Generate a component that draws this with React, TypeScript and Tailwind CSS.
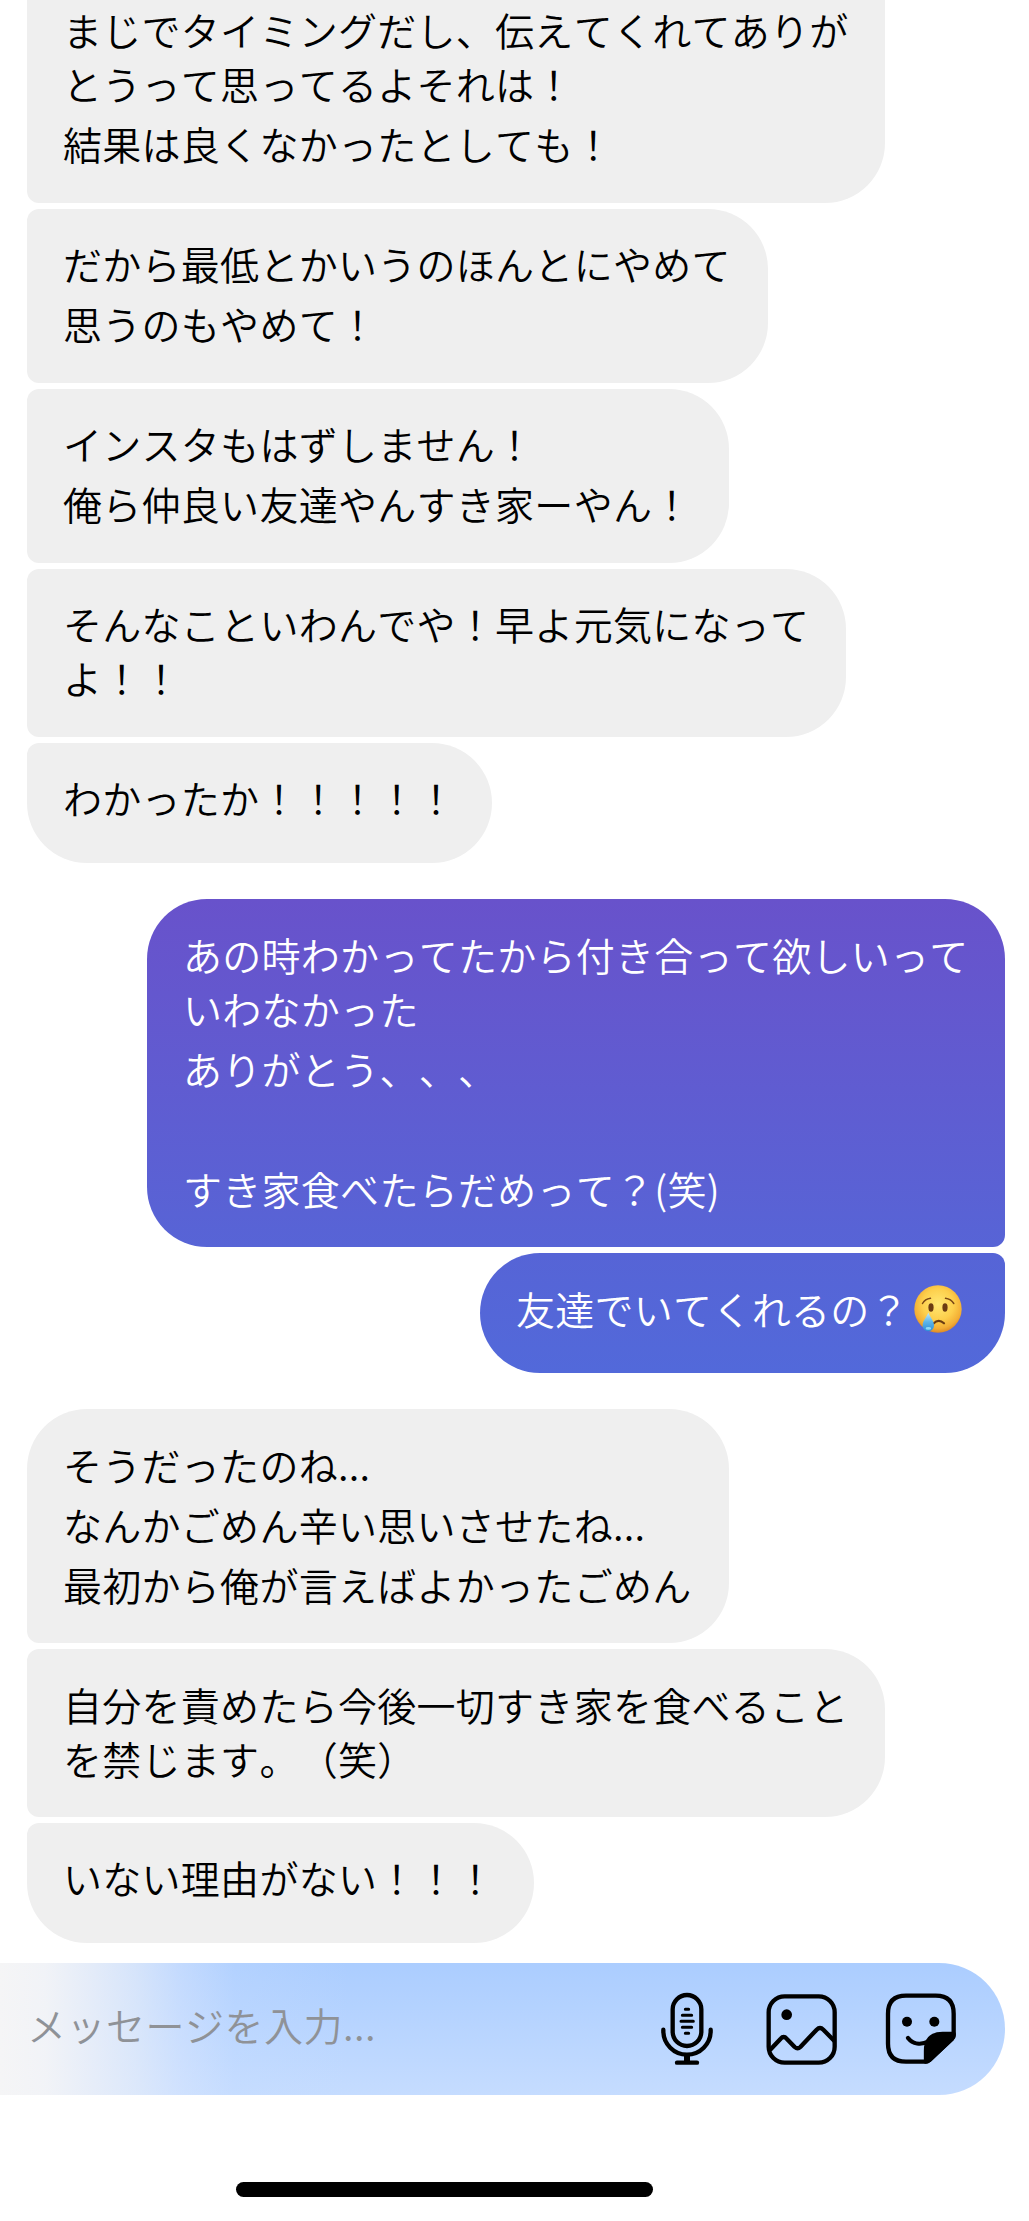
import clsx from "clsx";

type Message = {
	lines: string[][];
	sad?: boolean;
	className: string;
};

// every inner array is one paragraph, its items are the wrapped rows
const received: Message[] = [
	{
		lines: [
			["まじでタイミングだし、伝えてくれてありが", "とうって思ってるよそれは！"],
			["結果は良くなかったとしても！"],
		],
		className: "w-[858px] h-[203px] pt-[2px] rounded-br-[60px] rounded-bl-xl",
	},
	{
		lines: [["だから最低とかいうのほんとにやめて"], ["思うのもやめて！"]],
		className: "w-[741px] h-[174px] pt-[27px] rounded-r-[60px] rounded-l-xl",
	},
	{
		lines: [["インスタもはずしません！"], ["俺ら仲良い友達やんすき家ーやん！"]],
		className: "w-[702px] h-[174px] pt-[27px] rounded-r-[60px] rounded-l-xl",
	},
	{
		lines: [["そんなこといわんでや！早よ元気になって", "よ！！"]],
		className: "w-[819px] h-[168px] pt-[27px] rounded-r-[60px] rounded-l-xl",
	},
	{
		lines: [["わかったか！！！！！"]],
		className: "w-[465px] h-[120px] pt-[27px] rounded-[60px] rounded-tl-xl",
	},
];

const sent: Message[] = [
	{
		lines: [
			["あの時わかってたから付き合って欲しいって", "いわなかった"],
			["ありがとう、、、"],
			[""],
			["すき家食べたらだめって？(笑)"],
		],
		className:
			"w-[858px] h-[348px] pt-[28px] rounded-[60px] rounded-br-xl bg-linear-to-b from-[#6852cb] to-[#5764d6]",
	},
	{
		lines: [["友達でいてくれるの？"]],
		sad: true,
		className:
			"w-[525px] h-[120px] pt-[28px] rounded-[60px] rounded-tr-xl bg-linear-to-b from-[#5664d6] to-[#5269da]",
	},
];

const replies: Message[] = [
	{
		lines: [
			["そうだったのね..."],
			["なんかごめん辛い思いさせたね..."],
			["最初から俺が言えばよかったごめん"],
		],
		className: "w-[702px] h-[234px] pt-[28px] rounded-[60px] rounded-bl-xl",
	},
	{
		lines: [["自分を責めたら今後一切すき家を食べること", "を禁じます。（笑）"]],
		className: "w-[858px] h-[168px] pt-[28px] rounded-r-[60px] rounded-l-xl",
	},
	{
		lines: [["いない理由がない！！！"]],
		className: "w-[507px] h-[120px] pt-[27px] rounded-[60px] rounded-tl-xl",
	},
];

const CryingFace = () => (
	<svg viewBox="0 0 48 48" className="h-12 w-12 shrink-0">
		<defs>
			<radialGradient id="face" cx="0.5" cy="0.4" r="0.6">
				<stop offset="0" stopColor="#ffe873" />
				<stop offset="0.55" stopColor="#fdcf4c" />
				<stop offset="0.85" stopColor="#f3ae35" />
				<stop offset="1" stopColor="#dd8a26" />
			</radialGradient>
			<linearGradient id="tear" x1="0" y1="0" x2="0" y2="1">
				<stop offset="0" stopColor="#c5ecfb" />
				<stop offset="0.5" stopColor="#5cb5ea" />
				<stop offset="1" stopColor="#2f8fd8" />
			</linearGradient>
		</defs>
		<circle cx="24" cy="24" r="23.7" fill="url(#face)" />
		<ellipse cx="17" cy="22.5" rx="2.6" ry="4.2" fill="#6b3c12" />
		<ellipse cx="31" cy="22.5" rx="2.6" ry="4.2" fill="#6b3c12" />
		<path
			d="M8.5 18.5Q11 14 16.5 13.3M31.5 13.3Q37 14 39.8 18.5"
			fill="none"
			stroke="#7a4716"
			strokeWidth="1.5"
			strokeLinecap="round"
		/>
		<path
			d="M19.5 38.5Q24.5 33.2 30 38.3"
			fill="none"
			stroke="#6b3c12"
			strokeWidth="2.2"
			strokeLinecap="round"
		/>
		<path
			d="M14.3 27.5C16 32 20 36 20 40.3C20 44 17.5 46.2 14.4 46.2C11.2 46.2 8.6 44 8.6 40.3C8.6 36 12.6 32 14.3 27.5Z"
			fill="url(#tear)"
		/>
		<ellipse cx="14.4" cy="43.4" rx="2.8" ry="1.4" fill="#8fd8f6" />
	</svg>
);

const Bubble = ({ message, mine }: { message: Message; mine?: boolean }) => (
	<div
		className={clsx(
			"flex pl-9 text-[39px] leading-[54px] tracking-[0.28px]",
			mine ? "text-white" : "bg-[#efefef] text-black",
			message.className
		)}
	>
		<div className="flex flex-col gap-1.5">
			{message.lines.map((rows, i) => (
				<div key={i} className="min-h-[54px]">
					{rows.map((row) => (
						<p key={row} className="whitespace-nowrap">
							{row}
						</p>
					))}
				</div>
			))}
		</div>
		{message.sad && (
			<span className="mt-1 ml-[5px]">
				<CryingFace />
			</span>
		)}
	</div>
);

const MicIcon = () => (
	<svg
		viewBox="60 90 162 234"
		className="h-[78px] w-[54px]"
		fill="none"
		stroke="black"
		strokeWidth="13"
		strokeLinecap="round"
	>
		<rect x="98" y="105" width="86" height="153" rx="43" />
		<path d="M70 209v4a71 71 0 0 0 142 0v-4" />
		<path strokeWidth="18" strokeLinecap="butt" d="M141 286v22" />
		<path d="M111 308h60" />
		<path strokeWidth="9" d="M136 148h10M127 166h28M123 184h37M127 202h28M136 220h10" />
	</svg>
);

const PhotoIcon = () => (
	<svg
		viewBox="375 90 219 234"
		className="h-[78px] w-[73px]"
		fill="none"
		stroke="black"
		strokeWidth="13"
		strokeLinejoin="round"
	>
		<rect x="386" y="109" width="198" height="199" rx="48" />
		<circle cx="440" cy="164" r="16" fill="black" stroke="none" />
		<path d="M390 270L422 236Q431 226 440 236L464 261Q473 269 481 261L530 209Q540 199 550 209L584 244" />
	</svg>
);

const StickerIcon = () => (
	<svg
		viewBox="732 90 219 234"
		className="h-[78px] w-[73px]"
		fill="none"
		stroke="black"
		strokeWidth="13"
		strokeLinecap="round"
		strokeLinejoin="round"
	>
		<path d="M857 305H798Q744 305 744 251V161Q744 107 798 107H887Q941 107 941 161V226Q941 231 937 235L867 301Q863 305 857 305Z" />
		<path
			d="M941 222H908Q858 222 858 272V305Q862 305 867 301L937 235Q941 231 941 222Z"
			fill="black"
		/>
		<circle cx="801" cy="185" r="15" fill="black" stroke="none" />
		<circle cx="883" cy="185" r="15" fill="black" stroke="none" />
		<path d="M804 234C818 252 842 256 868 244" />
	</svg>
);

const MessageInput = () => (
	<div className="mt-5 mr-6 h-[132px] overflow-hidden rounded-r-[66px] bg-linear-to-b from-[#abcdff] to-[#c5dcff]">
		<div className="flex h-full items-center bg-[linear-gradient(to_right,#f5f5f6_0px,#f3f4f7f8_45px,#ecf0f8e0_90px,#e6edf9b8_135px,#dbe7fd80_180px,#c8deff40_235px,#b8d4ff00_350px)] pr-12 pl-[27px]">
			<span className="flex-1 pb-2.5 text-[39px] leading-[54px] tracking-[0.5px] text-[#8f9297]">
				メッセージを入力...
			</span>
			<MicIcon />
			<span className="ml-[51px]">
				<PhotoIcon />
			</span>
			<span className="ml-[46px]">
				<StickerIcon />
			</span>
		</div>
	</div>
);

const App = () => {
	return (
		<div className="h-[2221px] w-[1029px] overflow-hidden bg-white font-['Noto_Sans_CJK_JP',sans-serif] font-[350] [font-kerning:none] [text-spacing-trim:space-all]">
			<div className="flex flex-col gap-9 pr-6 pl-[27px]">
				<div className="flex flex-col items-start gap-1.5">
					{received.map((message, i) => (
						<Bubble key={i} message={message} />
					))}
				</div>
				<div className="flex flex-col items-end gap-1.5">
					{sent.map((message, i) => (
						<Bubble key={i} message={message} mine />
					))}
				</div>
				<div className="flex flex-col items-start gap-1.5">
					{replies.map((message, i) => (
						<Bubble key={i} message={message} />
					))}
				</div>
			</div>
			<MessageInput />
			<div className="mt-[87px] ml-[236px] h-[15px] w-[417px] rounded-full bg-black" />
		</div>
	);
};

export default App;
